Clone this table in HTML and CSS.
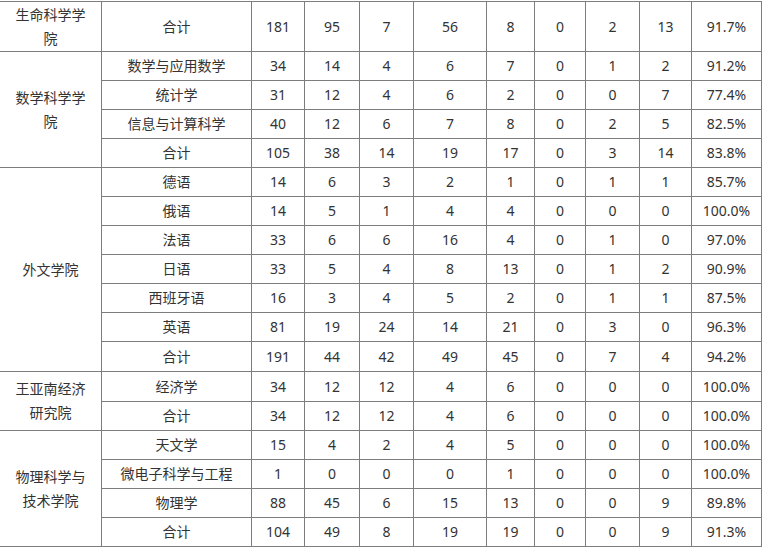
FILE: index.html
```html
<!DOCTYPE html>
<html lang="zh-CN">
<head>
<meta charset="utf-8">
<title>就业统计</title>
<link rel="stylesheet" href="styles.css">
</head>
<body>
<div class="sheet">
  <div class="c college span1">生命科学学院</div>
  <div class="c">合计</div><div class="c">181</div><div class="c">95</div><div class="c">7</div><div class="c">56</div><div class="c">8</div><div class="c">0</div><div class="c">2</div><div class="c">13</div><div class="c">91.7%</div>

  <div class="c college span4">数学科学学院</div>
  <div class="c">数学与应用数学</div><div class="c">34</div><div class="c">14</div><div class="c">4</div><div class="c">6</div><div class="c">7</div><div class="c">0</div><div class="c">1</div><div class="c">2</div><div class="c">91.2%</div>
  <div class="c">统计学</div><div class="c">31</div><div class="c">12</div><div class="c">4</div><div class="c">6</div><div class="c">2</div><div class="c">0</div><div class="c">0</div><div class="c">7</div><div class="c">77.4%</div>
  <div class="c">信息与计算科学</div><div class="c">40</div><div class="c">12</div><div class="c">6</div><div class="c">7</div><div class="c">8</div><div class="c">0</div><div class="c">2</div><div class="c">5</div><div class="c">82.5%</div>
  <div class="c">合计</div><div class="c">105</div><div class="c">38</div><div class="c">14</div><div class="c">19</div><div class="c">17</div><div class="c">0</div><div class="c">3</div><div class="c">14</div><div class="c">83.8%</div>

  <div class="c college span7">外文学院</div>
  <div class="c">德语</div><div class="c">14</div><div class="c">6</div><div class="c">3</div><div class="c">2</div><div class="c">1</div><div class="c">0</div><div class="c">1</div><div class="c">1</div><div class="c">85.7%</div>
  <div class="c">俄语</div><div class="c">14</div><div class="c">5</div><div class="c">1</div><div class="c">4</div><div class="c">4</div><div class="c">0</div><div class="c">0</div><div class="c">0</div><div class="c">100.0%</div>
  <div class="c">法语</div><div class="c">33</div><div class="c">6</div><div class="c">6</div><div class="c">16</div><div class="c">4</div><div class="c">0</div><div class="c">1</div><div class="c">0</div><div class="c">97.0%</div>
  <div class="c">日语</div><div class="c">33</div><div class="c">5</div><div class="c">4</div><div class="c">8</div><div class="c">13</div><div class="c">0</div><div class="c">1</div><div class="c">2</div><div class="c">90.9%</div>
  <div class="c">西班牙语</div><div class="c">16</div><div class="c">3</div><div class="c">4</div><div class="c">5</div><div class="c">2</div><div class="c">0</div><div class="c">1</div><div class="c">1</div><div class="c">87.5%</div>
  <div class="c">英语</div><div class="c">81</div><div class="c">19</div><div class="c">24</div><div class="c">14</div><div class="c">21</div><div class="c">0</div><div class="c">3</div><div class="c">0</div><div class="c">96.3%</div>
  <div class="c">合计</div><div class="c">191</div><div class="c">44</div><div class="c">42</div><div class="c">49</div><div class="c">45</div><div class="c">0</div><div class="c">7</div><div class="c">4</div><div class="c">94.2%</div>

  <div class="c college span2">王亚南经济研究院</div>
  <div class="c">经济学</div><div class="c">34</div><div class="c">12</div><div class="c">12</div><div class="c">4</div><div class="c">6</div><div class="c">0</div><div class="c">0</div><div class="c">0</div><div class="c">100.0%</div>
  <div class="c">合计</div><div class="c">34</div><div class="c">12</div><div class="c">12</div><div class="c">4</div><div class="c">6</div><div class="c">0</div><div class="c">0</div><div class="c">0</div><div class="c">100.0%</div>

  <div class="c college span4">物理科学与技术学院</div>
  <div class="c">天文学</div><div class="c">15</div><div class="c">4</div><div class="c">2</div><div class="c">4</div><div class="c">5</div><div class="c">0</div><div class="c">0</div><div class="c">0</div><div class="c">100.0%</div>
  <div class="c">微电子科学与工程</div><div class="c">1</div><div class="c">0</div><div class="c">0</div><div class="c">0</div><div class="c">1</div><div class="c">0</div><div class="c">0</div><div class="c">0</div><div class="c">100.0%</div>
  <div class="c">物理学</div><div class="c">88</div><div class="c">45</div><div class="c">6</div><div class="c">15</div><div class="c">13</div><div class="c">0</div><div class="c">0</div><div class="c">9</div><div class="c">89.8%</div>
  <div class="c">合计</div><div class="c">104</div><div class="c">49</div><div class="c">8</div><div class="c">19</div><div class="c">19</div><div class="c">0</div><div class="c">0</div><div class="c">9</div><div class="c">91.3%</div>
</div>
</body>
</html>
```
FILE: styles.css
```css
html, body {
  margin: 0;
  padding: 0;
  background: #ffffff;
}

body {
  font-family: "Noto Sans", "Noto Sans CJK SC", sans-serif;
  font-size: 14px;
  color: #333333;
}

.sheet {
  display: grid;
  grid-template-columns: 102px 150px 53px 55px 54px 73px 48px 51px 54px 52px 70px;
  grid-template-rows: 50px repeat(10, 29px) 30px 30px repeat(5, 29px);
  width: max-content;
  margin: 1px 0 0 -1px;
  border-top: 1px solid #7d7d7d;
  border-left: 1px solid #7d7d7d;
}

.c {
  box-sizing: border-box;
  display: flex;
  align-items: center;
  justify-content: center;
  text-align: center;
  border-right: 1px solid #7d7d7d;
  border-bottom: 1px solid #7d7d7d;
  line-height: 20px;
  white-space: nowrap;
}

.college {
  white-space: normal;
  padding: 0 9px;
  line-height: 24px;
}

.span1 { grid-row: span 1; }
.span2 { grid-row: span 2; }
.span4 { grid-row: span 4; }
.span7 { grid-row: span 7; }
```
